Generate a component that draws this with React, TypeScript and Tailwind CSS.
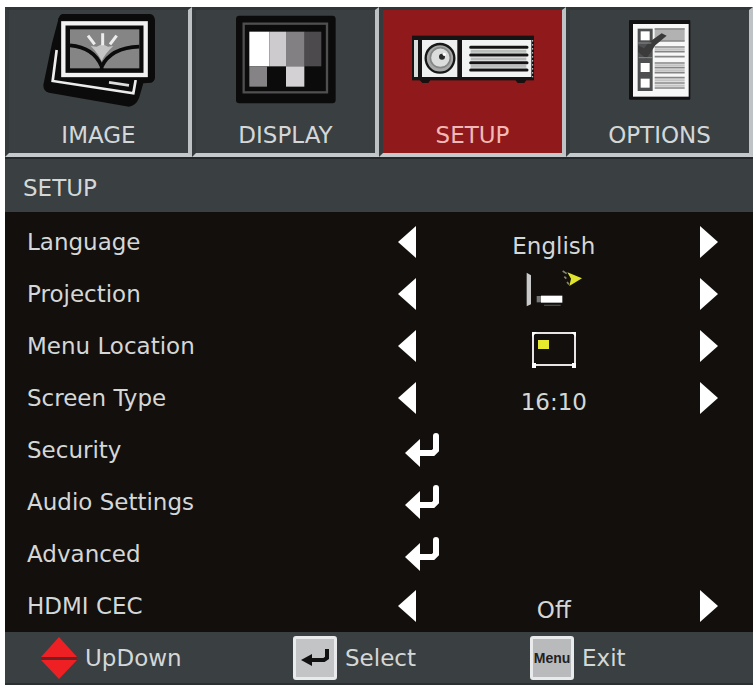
import { useState } from "react";
import type { ReactNode } from "react";

const ImageIcon = () => (
    <svg className="h-[100px] w-[116px]" viewBox="121 30 348 300" aria-hidden="true">
        <path d="M185 42 Q178 43 174 55 L154 130 L128 255 Q128 275 145 278 L385 320 Q405 318 415 295 L428 250 L452 248 Q463 244 463 232 L463 60 Q461 44 448 42 Z" fill="#0b0b0b" />
        <path d="M168 150 L156 243 L398 280 L405 240" fill="none" stroke="#ececec" strokeWidth="8" />
        <path d="M325 247 L385 256" stroke="#dcdcdc" strokeWidth="8" />
        <rect x="188" y="70" width="247" height="155" fill="#0b0b0b" stroke="#0b0b0b" strokeWidth="30" />
        <rect x="188" y="70" width="247" height="155" fill="#0b0b0b" stroke="#f1f1f1" strokeWidth="13" />
        <rect x="208" y="88" width="208" height="117" fill="#858585" />
        <path d="M270 138 Q294 162 303 184 Q312 162 338 138 L322 140 L305 132 L288 140 Z" fill="#c4c4c4" />
        <path d="M208 136 Q280 142 303 200 Q330 143 416 140 M303 190 V208" fill="none" stroke="#0b0b0b" strokeWidth="11" />
        <path d="M262 107 L282 133 M306 100 V136 M348 107 L328 133" stroke="#ededed" strokeWidth="9" />
    </svg>
);

const DisplayIcon = () => (
    <svg className="h-[100px] w-[104px]" viewBox="129 30 312 300" aria-hidden="true">
        <rect x="135" y="47" width="299" height="263" rx="10" fill="#0b0b0b" />
        <rect x="158" y="71" width="250" height="206" fill="none" stroke="#504e50" strokeWidth="7" />
        <rect x="175" y="95" width="60" height="104" fill="#ffffff" />
        <rect x="235" y="95" width="50" height="104" fill="#cdcbcd" />
        <rect x="285" y="95" width="56" height="104" fill="#828082" />
        <rect x="341" y="95" width="50" height="104" fill="#4c4a4c" />
        <rect x="175" y="199" width="53" height="61" fill="#858385" />
        <rect x="285" y="199" width="55" height="61" fill="#d3d1d3" />
    </svg>
);

const SetupIcon = () => (
    <svg className="h-[100px] w-[124px]" viewBox="124 30 372 300" aria-hidden="true">
        <path d="M150 240 H182 L176 249 H158 Z M437 240 H470 L464 249 H444 Z" fill="#1a1010" />
        <rect x="127" y="107" width="366" height="134" fill="#151313" />
        <rect x="133" y="120" width="12" height="111" fill="#d8dcda" />
        <rect x="157" y="120" width="106" height="111" fill="#eef1f0" />
        <rect x="277" y="120" width="208" height="111" fill="#f2f4f3" />
        <circle cx="211" cy="175" r="43" fill="#a7a9a8" stroke="#171717" strokeWidth="7" />
        <circle cx="212" cy="173" r="30" fill="#dadddb" stroke="#858786" strokeWidth="5" />
        <circle cx="217" cy="170" r="9" fill="#2a2a2a" />
        <circle cx="224" cy="163" r="5" fill="#ffffff" />
        <path d="M303 154 H470 M303 177 H470 M303 199 H470" stroke="#b9bdbb" strokeWidth="9" />
        <path d="M303 142 H472 M303 165 H472 M303 188 H472 M303 210 H472" stroke="#151313" strokeWidth="9" strokeLinecap="round" />
        <path d="M489 120 V232" stroke="#dadada" strokeWidth="3" strokeDasharray="5 7" />
    </svg>
);

const OptionsIcon = () => (
    <svg className="h-[100px] w-[64px]" viewBox="200 30 192 300" aria-hidden="true">
        <rect x="203" y="60" width="184" height="239" rx="3" fill="#111111" />
        <rect x="215" y="72" width="167" height="218" fill="#f7f7f7" />
        <rect x="280" y="85" width="90" height="38" fill="#b2b2b2" />
        <path d="M280 87 H370 M283 123 H370 M280 141 H370 M280 155 H370 M280 170 H370 M280 189 H370 M280 203 H370 M280 218 H370 M280 233 H370 M280 249 H370 M280 264 H370" stroke="#858585" strokeWidth="5" />
        <path d="M280 148 H370 M280 196 H370 M280 211 H370 M280 241 H370 M280 257 H370" stroke="#c3c3c3" strokeWidth="7" />
        <rect x="229" y="86" width="45" height="187" fill="#4d4f50" />
        <rect x="238" y="94" width="27" height="27" fill="#ffffff" />
        <rect x="238" y="189" width="27" height="27" fill="#ffffff" />
        <rect x="238" y="236" width="27" height="27" fill="#ffffff" />
        <path d="M230 136 L248 145 L264 126 L301 100 L316 107 L282 136 L255 176 L230 155 Z" fill="#3b3b3b" />
        <path d="M231 129 H270 M232 173 H272" stroke="#8b8b8b" strokeWidth="3" />
    </svg>
);

const ProjectionIcon = () => (
    <svg className="h-[38px] w-[56px]" viewBox="436 174 168 114" role="img" aria-label="Front desktop">
        <path d="M438 185 L451 193 V280 L438 286 Z" fill="#c9c9c9" />
        <rect x="468" y="255" width="13" height="19" fill="#777777" />
        <rect x="481" y="254" width="64" height="21" fill="#ffffff" />
        <path d="M490 283 H540" stroke="#4a4a48" strokeWidth="4" />
        <path d="M560 184 L604 202 L566 225 L571 203 Z" fill="#dfe32c" />
        <path d="M546 180 L558 188 M551 197 L557 203 M559 213 L565 220" stroke="#85856a" strokeWidth="5" />
    </svg>
);

const LocationIcon = () => (
    <svg className="h-[36px] w-[44px]" viewBox="0 0 44 36" role="img" aria-label="Top left">
        <rect x="1" y="1" width="42" height="32" fill="none" stroke="#e8e4e6" strokeWidth="2" />
        <path d="M0 0H5L0 5ZM44 0H39L44 5ZM0 31H4V36H0ZM40 31H44V36H40Z" fill="#ffffff" />
        <rect x="6" y="8" width="11" height="9" fill="#e6ea2e" />
    </svg>
);

const EnterArrow = () => (
    <svg className="h-[34px] w-[36px]" viewBox="0 0 36 34" aria-hidden="true">
        <path d="M0 20 L15 6 V34 Z" fill="#ffffff" />
        <path d="M13 20 H28 L31 17 V3" fill="none" stroke="#ffffff" strokeWidth="6" strokeLinecap="round" />
    </svg>
);

const tabs = [
    { id: "IMAGE", icon: <ImageIcon /> },
    { id: "DISPLAY", icon: <DisplayIcon /> },
    { id: "SETUP", icon: <SetupIcon /> },
    { id: "OPTIONS", icon: <OptionsIcon /> },
];

const rows: { label: string; value?: ReactNode }[] = [
    { label: "Language", value: <span className="pt-2">English</span> },
    { label: "Projection", value: <div className="pb-3"><ProjectionIcon /></div> },
    { label: "Menu Location", value: <div className="pt-2"><LocationIcon /></div> },
    { label: "Screen Type", value: <span className="pt-2">16:10</span> },
    { label: "Security" },
    { label: "Audio Settings" },
    { label: "Advanced" },
    { label: "HDMI CEC", value: <span className="pt-2">Off</span> },
];

export default function App() {
    const [active, setActive] = useState("SETUP");

    return (
        <div className="min-h-screen bg-white pt-[7px] pr-[3px] pl-[5px] font-['DejaVu_Sans',sans-serif] text-[23px] leading-7 text-[#d4d7d7]">
            <main className="bg-[#3a3f42]">
                {/* Tabs */}
                <nav className="grid grid-cols-4 border-b-2 border-[#24282a]">
                    {tabs.map((tab) => (
                        <button
                            key={tab.id}
                            type="button"
                            aria-pressed={active === tab.id}
                            onClick={() => setActive(tab.id)}
                            className={`flex flex-col items-center gap-[11px] border-4 border-t-[3px] border-t-[#303538] border-r-[#bfc2c5] border-b-[#c6c9cb] border-l-[#353a3d] pb-1 ${active === tab.id ? "bg-[#90191b] text-[#f0b9b7]" : "bg-[#3a3f42]"}`}
                        >
                            {tab.icon}
                            <span>{tab.id}</span>
                        </button>
                    ))}
                </nav>

                <h1 className="px-[18px] pt-[15px] pb-[10px]">{active}</h1>

                {/* Settings */}
                <ul className="bg-[#120f0d] pt-1">
                    {rows.map((row) => (
                        <li key={row.label} className="grid h-[52px] grid-cols-[21fr_19fr] items-center">
                            <span className="pl-[22px]">{row.label}</span>
                            {row.value ? (
                                <div className="flex items-center justify-between pr-[35px]">
                                    <button type="button" aria-label={`Previous ${row.label}`}>
                                        <svg className="h-8 w-[18px]" viewBox="0 0 18 32" aria-hidden="true">
                                            <path d="M18 0V32L0 16Z" fill="#ffffff" />
                                        </svg>
                                    </button>
                                    <div className="flex h-[52px] items-center pr-2">{row.value}</div>
                                    <button type="button" aria-label={`Next ${row.label}`}>
                                        <svg className="h-8 w-[18px]" viewBox="0 0 18 32" aria-hidden="true">
                                            <path d="M0 0V32L18 16Z" fill="#ffffff" />
                                        </svg>
                                    </button>
                                </div>
                            ) : (
                                <button type="button" aria-label={`Open ${row.label}`} className="justify-self-start pl-[7px]">
                                    <EnterArrow />
                                </button>
                            )}
                        </li>
                    ))}
                </ul>

                {/* Key hints */}
                <footer className="grid h-[53px] grid-cols-[252fr_237fr_223fr] items-center border-b-2 border-[#2b2f31] pl-9">
                    <button type="button" className="flex items-center gap-2">
                        <svg className="h-[42px] w-9" viewBox="0 0 36 42" aria-hidden="true">
                            <path d="M18 0L36 20H0ZM0 23H36L18 42Z" fill="#ee2024" />
                            <path d="M0 20H36V23H0Z" fill="#6b2326" />
                        </svg>
                        <span>UpDown</span>
                    </button>
                    <button type="button" className="flex items-center gap-2">
                        <span className="flex size-[44px] items-center justify-center rounded-[3px] border-[3px] border-[#e9eaeb] bg-[#c3c4c6]">
                            <svg className="h-[18px] w-7" viewBox="0 0 28 18" aria-hidden="true">
                                <path d="M0 11L11 5V17Z" fill="#111111" />
                                <path d="M9 11H23L26 9V0" fill="none" stroke="#111111" strokeWidth="4" />
                            </svg>
                        </span>
                        <span>Select</span>
                    </button>
                    <button type="button" className="flex items-center gap-2">
                        <span className="flex size-[44px] items-center justify-center rounded-[3px] border-[3px] border-[#e9eaeb] bg-[#b9babc] font-['Liberation_Sans',sans-serif] text-[14px] leading-5 font-bold text-[#222222]">
                            Menu
                        </span>
                        <span>Exit</span>
                    </button>
                </footer>
            </main>
        </div>
    );
}
